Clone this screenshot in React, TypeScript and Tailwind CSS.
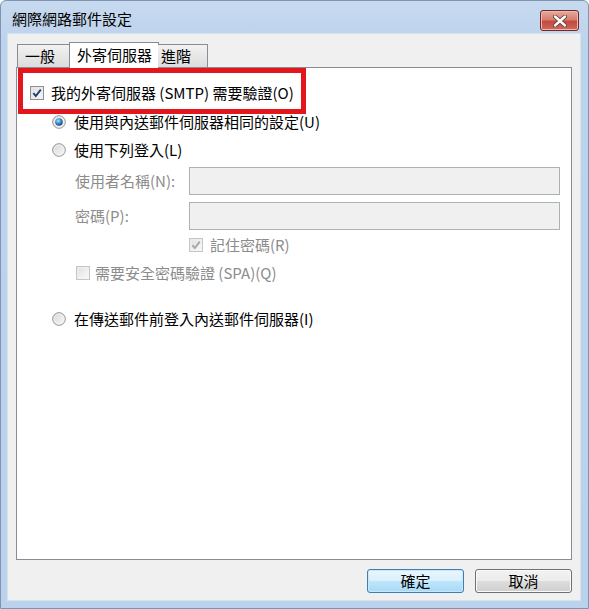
import React from "react";

const font = { fontFamily: '"Noto Sans CJK TC", "Noto Sans", sans-serif' };

function Radio({ checked }: { checked?: boolean }) {
  return (
    <svg width="14" height="14" viewBox="0 0 14 14" className="shrink-0">
      <defs>
        <linearGradient id="rg" x1="0" y1="0" x2="1" y2="1">
          <stop offset="0" stopColor="#d4d4d4" />
          <stop offset="1" stopColor="#fbfbfb" />
        </linearGradient>
        <radialGradient id="rd" cx="0.4" cy="0.35" r="0.7">
          <stop offset="0" stopColor="#b7e1fb" />
          <stop offset="0.5" stopColor="#3b8cce" />
          <stop offset="1" stopColor="#0c3f73" />
        </radialGradient>
      </defs>
      <circle cx="7" cy="7" r="6.3" fill="url(#rg)" stroke="#8f8f8f" strokeWidth="1" />
      <circle cx="7" cy="7" r="5" fill="none" stroke="#f4f4f4" strokeWidth="0.8" />
      {checked && <circle cx="7" cy="7" r="3.8" fill="url(#rd)" />}
    </svg>
  );
}

function Check({ checked, disabled }: { checked?: boolean; disabled?: boolean }) {
  const border = disabled ? "#c6c6c6" : "#8f8f8f";
  const mark = disabled ? "#a8a8a8" : "#1f3f6e";
  return (
    <svg width="14" height="14" viewBox="0 0 14 14" className="shrink-0">
      <defs>
        <linearGradient id="cg" x1="0" y1="0" x2="1" y2="1">
          <stop offset="0" stopColor={disabled ? "#f0f0f0" : "#dcdcdc"} />
          <stop offset="1" stopColor="#fdfdfd" />
        </linearGradient>
      </defs>
      <rect x="0.5" y="0.5" width="13" height="13" fill="url(#cg)" stroke={border} />
      <rect x="2" y="2" width="10" height="10" fill="none" stroke={disabled ? "#f3f3f3" : "#e9e9e9"} />
      {checked && (
        <path d="M3.3 7.2 L5.8 10 L10.8 3.6" fill="none" stroke={mark} strokeWidth="1.9" />
      )}
    </svg>
  );
}

function WinButton({ label, isDefault }: { label: string; isDefault?: boolean }) {
  return (
    <div
      className={
        "w-[97px] h-[24px] rounded-[3px] border flex items-center justify-center text-[15px] text-black " +
        (isDefault
          ? "border-[#3c7fb1] bg-[linear-gradient(to_bottom,#eaf6fd_0%,#d9f0fc_50%,#bee6fd_51%,#a7d9f5_100%)] shadow-[inset_0_0_0_1px_#c9e7f8]"
          : "border-[#707070] bg-[linear-gradient(to_bottom,#f2f2f2_0%,#ebebeb_50%,#dddddd_51%,#cfcfcf_100%)] shadow-[inset_0_0_0_1px_#fbfbfb]")
      }
    >
      {label}
    </div>
  );
}

export default function App() {
  return (
    <div
      style={font}
      className="w-[589px] h-[609px] bg-[linear-gradient(to_bottom,#c6d9ef_0%,#bcd3ec_8%,#bad2ec_100%)] border border-[#7d95b2] rounded-t-[6px] flex flex-col overflow-hidden"
    >
      {/* title bar */}
      <div className="h-[32px] flex items-start relative shrink-0">
        <div className="pl-[11px] pt-[8px] text-[15px] leading-[20px] text-black">網際網路郵件設定</div>
        <div className="absolute left-[539px] top-[9px] w-[39px] h-[21px] rounded-[3px] border border-[#6e2a26] bg-[linear-gradient(to_bottom,#e9a99c_0%,#d47f72_45%,#c4493c_55%,#cf6a5a_100%)] flex items-center justify-center shadow-[inset_0_0_0_1px_#f0b8ad]">
          <svg width="14" height="12" viewBox="0 0 14 12">
            <path d="M2 1.5 L12 10.5 M12 1.5 L2 10.5" stroke="#5a3a38" strokeWidth="4" strokeLinecap="round" />
            <path d="M2 1.5 L12 10.5 M12 1.5 L2 10.5" stroke="#ffffff" strokeWidth="2.4" strokeLinecap="round" />
          </svg>
        </div>
      </div>

      {/* client */}
      <div className="ml-[6px] mr-[7px] mb-[7px] flex-1 bg-[#f0f0f0] border border-[#d7e2ef] flex flex-col">
        <div className="pl-[8px] pt-[8px] flex flex-col">
          {/* tabs */}
          <div className="flex items-end h-[25px] pl-[1px] relative z-10">
            <div className="w-[53px] h-[23px] border border-b-0 border-[#898c95] bg-[linear-gradient(to_bottom,#f2f2f2,#dcdcdc)] text-[15px] leading-[22px] pl-[7px] text-black">
              一般
            </div>
            <div className="w-[90px] h-[26px] -mb-[1px] border border-b-0 border-[#898c95] bg-white text-[15px] leading-[24px] pl-[7px] text-black -mx-[1px]">
              外寄伺服器
            </div>
            <div className="w-[50px] h-[23px] border border-b-0 border-l-0 border-[#898c95] bg-[linear-gradient(to_bottom,#f2f2f2,#dcdcdc)] text-[15px] leading-[22px] pl-[3px] text-black">
              進階
            </div>
          </div>

          {/* panel */}
          <div className="w-[556px] h-[493px] bg-white border border-[#898c95] flex flex-col text-[15px] text-black">
            <div className="ml-[1px] w-[288px] h-[46px] border-[5px] border-[#e3161d] flex items-center pl-[7px] pt-[4px] gap-[7px]">
              <Check checked />
              <span className="leading-[18px]">我的外寄伺服器 (SMTP) 需要驗證(O)</span>
            </div>

            <div className="-mt-[1px] h-[18px] flex items-center pl-[35px] gap-[8px]">
              <Radio checked />
              <span className="leading-[18px]">使用與內送郵件伺服器相同的設定(U)</span>
            </div>
            <div className="mt-[10px] h-[18px] flex items-center pl-[35px] gap-[8px]">
              <Radio />
              <span className="leading-[18px]">使用下列登入(L)</span>
            </div>

            <div className="mt-[8px] h-[28px] flex items-center">
              <span className="w-[172px] pl-[58px] text-[#8c8c8c] leading-[18px]">使用者名稱(N):</span>
              <div className="w-[371px] h-[28px] bg-[#f0f0f0] border border-[#adb2b5]" />
            </div>
            <div className="mt-[7px] h-[28px] flex items-center">
              <span className="w-[172px] pl-[58px] text-[#8c8c8c] leading-[18px]">密碼(P):</span>
              <div className="w-[371px] h-[28px] bg-[#f0f0f0] border border-[#adb2b5]" />
            </div>

            <div className="mt-[6px] h-[18px] flex items-center pl-[172px] gap-[7px]">
              <Check checked disabled />
              <span className="text-[#8c8c8c] leading-[18px]">記住密碼(R)</span>
            </div>
            <div className="mt-[10px] h-[18px] flex items-center pl-[59px] gap-[5px]">
              <Check disabled />
              <span className="text-[#8c8c8c] leading-[18px]">需要安全密碼驗證 (SPA)(Q)</span>
            </div>

            <div className="mt-[28px] h-[18px] flex items-center pl-[35px] gap-[8px]">
              <Radio />
              <span className="leading-[18px]">在傳送郵件前登入內送郵件伺服器(I)</span>
            </div>
          </div>

          {/* buttons */}
          <div className="w-[556px] flex justify-end gap-[11px] mt-[9px]">
            <WinButton label="確定" isDefault />
            <WinButton label="取消" />
          </div>
        </div>
      </div>
    </div>
  );
}
